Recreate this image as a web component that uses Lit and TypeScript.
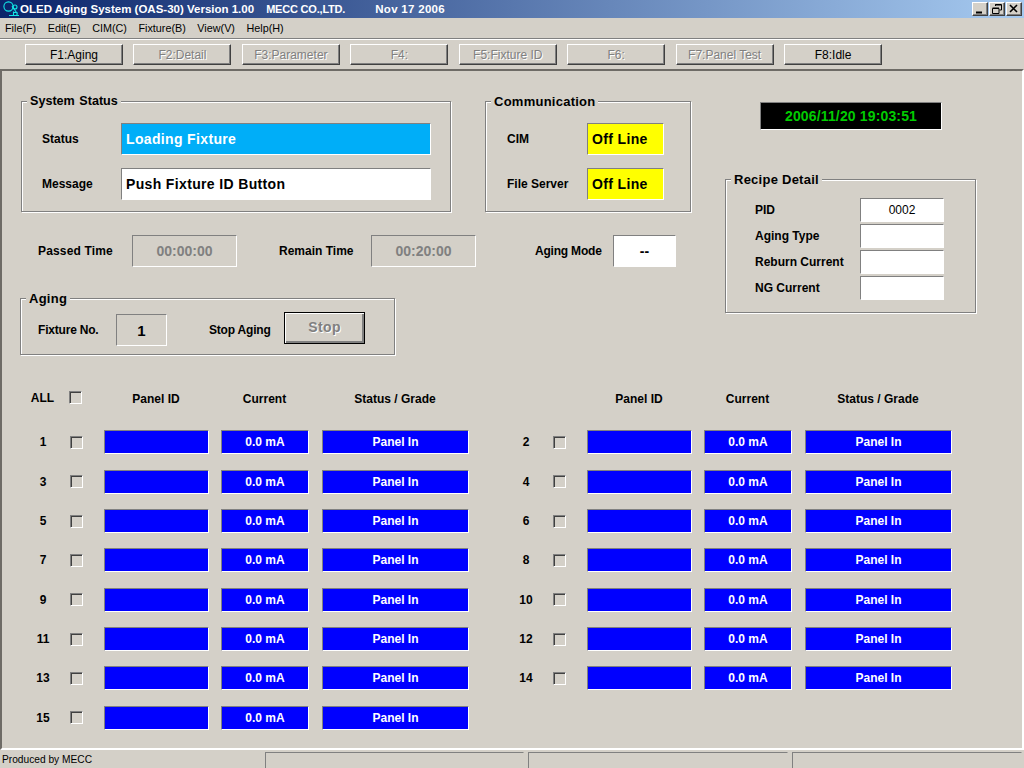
import { LitElement, html, css } from "lit";
import { customElement } from "lit/decorators.js";

const TOOLS = [
  ["F1:Aging", true], ["F2:Detail", false], ["F3:Parameter", false], ["F4:", false],
  ["F5:Fixture ID", false], ["F6:", false], ["F7:Panel Test", false], ["F8:Idle", true],
] as const;
const MENUS = ["File(F)", "Edit(E)", "CIM(C)", "Fixture(B)", "View(V)", "Help(H)"];
const RECIPE = [["PID", "0002"], ["Aging Type", ""], ["Reburn Current", ""], ["NG Current", ""]];

@customElement("app-root")
export class AppRoot extends LitElement {
  static styles = css`
    :host { display: block; width: 1024px; height: 768px; overflow: hidden; background: #d4d0c8;
      font-family: "Liberation Sans", Arial, sans-serif; font-size: 12px; color: #000; }
    .window { display: flex; flex-direction: column; height: 768px; }
    .title { height: 18px; flex: none; display: flex; align-items: center; color: #fff;
      background: linear-gradient(90deg, #0a246a, #a6caf0); font-weight: bold; font-size: 11.5px; white-space: nowrap; }
    .title svg { margin: 0 0 0 2px; flex: none; }
    .title .t2 { margin-left: 12px; font-size: 11px; letter-spacing: -.2px; }
    .title .t3 { margin-left: 30px; letter-spacing: .3px; }
    .caps { margin-left: auto; display: flex; margin-right: 2px; gap: 1px; }
    .cap { width: 16px; height: 14px; box-sizing: border-box; background: #d4d0c8; display: flex;
      border: 1px solid; border-color: #fff #404040 #404040 #fff; box-shadow: inset -1px -1px 0 #808080; }
    .cap svg { margin: 0; }
    .menu { height: 20px; flex: none; display: flex; padding-left: 5px; align-items: center; gap: 11.5px; font-size: 10.8px; }
    .sep { height: 1px; background: #808080; border-bottom: 1px solid #fff; flex: none; }
    .tools { height: 29px; flex: none; padding: 4px 0 0 25px; box-sizing: border-box;
      display: grid; grid-template-columns: repeat(8, 98px); column-gap: 10.45px; }
    .tool { height: 21px; box-sizing: border-box; display: flex; align-items: center; justify-content: center;
      background: #d4d0c8; border: 1px solid; border-color: #fff #404040 #404040 #fff;
      box-shadow: inset -1px -1px 0 #808080; font-size: 12px; }
    .tool.off { color: #808080; text-shadow: 1px 1px 0 #fff; }
    .main { flex: 1; min-height: 0; box-sizing: border-box; border: 2px solid; border-color: #6e6b66 #fff #fff #6e6b66;
      padding: 30px 0 0 18px; display: flex; flex-direction: column; }
    .top { display: flex; height: 283px; flex: none; }
    .left { width: 705px; flex: none; display: flex; flex-direction: column; }
    .groups { display: flex; margin-left: 1px; gap: 34px; }
    .group { position: relative; box-sizing: border-box; border: 1px solid #808080;
      box-shadow: 1px 1px 0 #fff, inset 1px 1px 0 #fff; }
    .legend { position: absolute; left: 5px; top: -8px; padding: 0 3px; background: #d4d0c8; font-weight: bold;
      font-size: 13px; line-height: 15px; letter-spacing: .25px; white-space: nowrap; }
    .sys { width: 430px; height: 111px; padding: 21px 0 0 20px; display: grid;
      grid-template-columns: 79px 310px; grid-auto-rows: 32px; row-gap: 13px; align-items: center; }
    .sys .legend { letter-spacing: 0; font-size: 12.6px; word-spacing: 1px; }
    .comm { width: 206px; height: 111px; padding: 21px 0 0 21px; display: grid;
      grid-template-columns: 80px 77px; grid-auto-rows: 32px; row-gap: 13px; align-items: center; }
    .lbl { font-weight: bold; white-space: nowrap; }
    .field { box-sizing: border-box; border: 1px solid; border-color: #808080 #fff #fff #808080;
      display: flex; align-items: center; white-space: nowrap; }
    .big { height: 32px; padding-left: 4px; font-weight: bold; font-size: 14px; letter-spacing: .35px; }
    .blue { background: #00aef8; color: #fff; }
    .white { background: #fff; }
    .yellow { background: #ff0; }
    .times { display: grid; grid-template-columns: 94px 105px 134px 105px 137px 63px; align-items: center; height: 32px; margin: 23px 0 0 18px; }
    .wide { letter-spacing: .15px; }
    .pl42 { padding-left: 42px; }
    .pl59 { padding-left: 59px; letter-spacing: -.2px; }
    .center { justify-content: center; }
    .time { height: 32px; color: #808080; font-weight: bold; font-size: 14px; }
    .mode { color: #000; }
    .aging { width: 375px; height: 57px; margin-top: 31px; display: grid; grid-template-columns: 78px 51px 117px 81px;
      align-items: center; align-content: start; padding: 15px 0 0 17px; }
    .aging .lbl { letter-spacing: -.2px; }
    .fix { height: 32px; font-size: 15px; font-weight: bold; }
    .stop { height: 32px; margin-top: -4px; box-sizing: border-box; border: 1px solid #000;
      background: #d4d0c8; box-shadow: inset 1px 1px 0 #fff, inset -2px -2px 0 #808080; display: flex;
      align-items: center; justify-content: center; font-weight: bold; font-size: 14px; letter-spacing: .4px; color: #808080; text-shadow: 1px 1px 0 #fff; padding-bottom: 2px; }
    .right { display: flex; flex-direction: column; }
    .clock { width: 182px; height: 28px; margin: 1px 0 0 35px; box-sizing: border-box; background: #000; color: #0c0;
      font-weight: bold; font-size: 14px; letter-spacing: .15px; }
    .recipe { width: 251px; height: 134px; margin-top: 49px; padding: 18px 0 0 29px; display: grid;
      grid-template-columns: 105px 84px; grid-auto-rows: 24px; row-gap: 2px; align-items: center; }
    .recipe .field { height: 24px; background: #fff; font-size: 12px; }
    .panels { margin-top: 7px; margin-left: 2px; display: grid; grid-template-columns: 483px 483px;
      grid-template-rows: repeat(9, 24px); row-gap: 15.35px; }
    .row { display: grid; grid-template-columns: 42px 40px 105px 12px 88px 13px 147px; align-items: center; height: 24px; }
    .num { text-align: center; font-weight: bold; }
    .chk { width: 13px; height: 13px; margin-left: 6px; box-sizing: border-box; border: 1px solid; border-color: #808080 #fff #fff #808080;
      box-shadow: inset 1px 1px 0 #404040; }
    .cell { height: 24px; background: #00f; color: #fff; font-weight: bold; }
    .head { text-align: center; font-weight: bold; padding-right: 1px; }
    .hrow { margin-top: -4px; }
    .hrow .chk { margin: -3px 0 0 5px; }
    .hrow .num { margin-top: -2px; padding-right: 1px; }
    .status { flex: none; height: 18px; display: grid; grid-template-columns: 263px 263px 264px 1fr; }
    .status div { box-sizing: border-box; white-space: nowrap; }
    .status .txt { font-size: 10.2px; line-height: 20px; padding-left: 2px; }
    .status .pane { border: 1px solid; border-color: #808080 #d4d0c8 #d4d0c8 #808080; margin: 2px 2px 0 2px; }
  `;

  private row(n: number) {
    return html`<div class="row">
      <div class="num">${n}</div><div class="chk"></div>
      <div class="field cell"></div><span></span>
      <div class="field cell center">0.0 mA</div><span></span>
      <div class="field cell center">Panel In</div>
    </div>`;
  }

  private head(all: boolean) {
    return html`<div class="row hrow">
      <div class="num">${all ? "ALL" : ""}</div>
      ${all ? html`<div class="chk"></div>` : html`<span></span>`}
      <div class="head">Panel ID</div><span></span>
      <div class="head">Current</div><span></span>
      <div class="head">Status / Grade</div>
    </div>`;
  }

  render() {
    const nums = Array.from({ length: 14 }, (_, i) => i + 1);
    return html`<div class="window">
      <div class="title">
        <svg width="18" height="18" viewBox="0 0 18 18" fill="none" stroke="#12e6e6" stroke-width="1.1">
          <circle cx="6.5" cy="6.5" r="4.6"/>
          <circle cx="13" cy="7" r="2"/>
          <path d="M10 6l5.5 8M7 15.5h10M11.5 11.5v4M15 12v3.5M11.5 12.5h3.5"/>
        </svg>
        <span>OLED Aging System (OAS-30) Version 1.00</span><span class="t2">MECC CO.,LTD.</span><span class="t3">Nov 17 2006</span>
        <div class="caps">
          <div class="cap"><svg width="14" height="12"><path d="M3 9.5h6" stroke="#000" stroke-width="2"/></svg></div>
          <div class="cap"><svg width="14" height="12"><path d="M5.5 3V1.5h6v5.5H9.5M2.5 5.5h6.5v5H2.5z M5 2h6M2.5 5h6.5" stroke="#000" fill="none"/></svg></div>
          <div class="cap"><svg width="14" height="12"><path d="M3 2l7 7M10 2l-7 7" stroke="#000" stroke-width="1.6"/></svg></div>
        </div>
      </div>
      <div class="menu">${MENUS.map((m) => html`<span>${m}</span>`)}</div>
      <div class="sep"></div>
      <div class="tools">${TOOLS.map(([t, on]) => html`<div class="tool ${on ? "" : "off"}">${t}</div>`)}</div>
      <div class="main">
        <div class="top">
          <div class="left">
            <div class="groups">
              <div class="group sys">
                <div class="legend">System Status</div>
                <div class="lbl">Status</div><div class="field big blue">Loading Fixture</div>
                <div class="lbl">Message</div><div class="field big white">Push Fixture ID Button</div>
              </div>
              <div class="group comm">
                <div class="legend">Communication</div>
                <div class="lbl">CIM</div><div class="field big yellow">Off Line</div>
                <div class="lbl">File Server</div><div class="field big yellow">Off Line</div>
              </div>
            </div>
            <div class="times">
              <div class="lbl wide">Passed Time</div><div class="field center time">00:00:00</div>
              <div class="lbl pl42">Remain Time</div><div class="field center time">00:20:00</div>
              <div class="lbl pl59">Aging Mode</div>
              <div class="field center white time mode">--</div>
            </div>
            <div class="group aging">
              <div class="legend">Aging</div>
              <div class="lbl">Fixture No.</div><div class="field center fix">1</div>
              <div class="lbl pl42">Stop Aging</div><div class="stop">Stop</div>
            </div>
          </div>
          <div class="right">
            <div class="field center clock">2006/11/20 19:03:51</div>
            <div class="group recipe">
              <div class="legend">Recipe Detail</div>
              ${RECIPE.map(([k, v]) => html`<div class="lbl">${k}</div><div class="field center">${v}</div>`)}
            </div>
          </div>
        </div>
        <div class="panels">
          ${this.head(true)}${this.head(false)}
          ${nums.map((n) => this.row(n))}
          ${this.row(15)}
        </div>
      </div>
      <div class="status"><div class="txt">Produced by MECC</div><div class="pane"></div><div class="pane"></div><div class="pane"></div></div>
    </div>`;
  }
}
